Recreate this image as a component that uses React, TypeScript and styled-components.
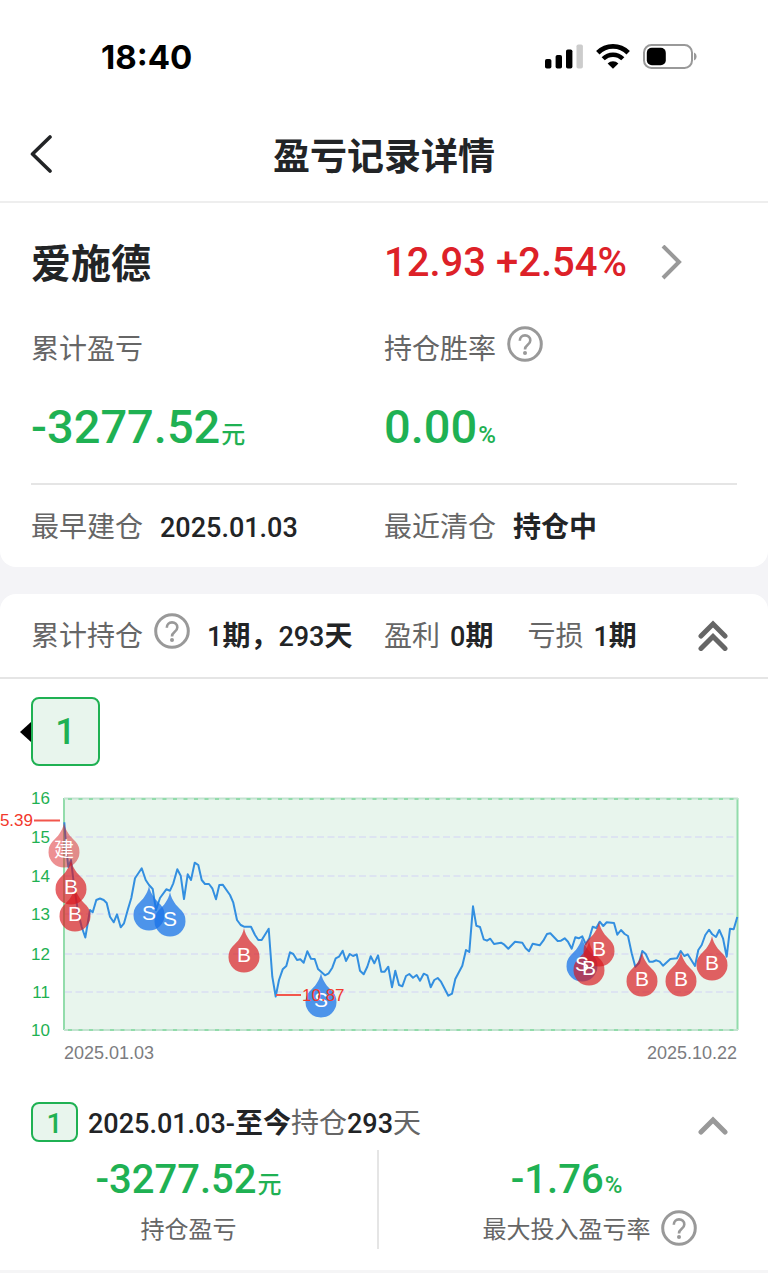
import React from "react";
import styled, { createGlobalStyle } from "styled-components";

const ink = "#222426";
const muted = "#666666";
const green = "#1fb153";
const red = "#dd2128";
const cjk = `"Noto Sans CJK SC", sans-serif`;
const digits = `Roboto, "Noto Sans CJK SC", sans-serif`;

const GlobalStyle = createGlobalStyle`
  *, *::before, *::after { box-sizing: border-box; }
  body { margin: 0; background: #f4f4f7; color: ${ink}; font-family: ${cjk}; overflow-x: hidden; }
  button { margin: 0; padding: 0; border: 0; background: none; color: inherit; font: inherit; cursor: pointer; }
  h1, h2, dl, dd, dt { margin: 0; font-weight: inherit; }
  svg { display: block; }
`;

const StatusBar = styled.div`
  display: flex;
  align-items: center;
  justify-content: space-between;
  height: 110px;
  padding: 2px 71px 0 101px;
  background: #fff;
`;

const Clock = styled.time`
  padding-top: 2px;
  font: 700 33px/40px Inter, sans-serif;
  color: #000;
`;

const StatusIcons = styled.div`
  display: flex;
  align-items: center;
  gap: 13px;
`;

const NavBar = styled.header`
  display: grid;
  grid-template-columns: 60px 1fr 60px;
  align-items: center;
  height: 93px;
  padding: 0 30px 3px;
  background: #fff;
  border-bottom: 2px solid #eeeeee;
`;

const Title = styled.h1`
  font-size: 37px;
  line-height: 48px;
  font-weight: 700;
  text-align: center;
`;

const Card = styled.section<{ $round: "top" | "bottom" }>`
  background: #fff;
  border-radius: ${(p) => (p.$round === "top" ? "16px 16px 0 0" : "0 0 16px 16px")};
`;

const Summary = styled(Card)`
  padding: 30px 31px 0;
  margin-bottom: 27px;
`;

const Columns = styled.div<{ $h: number; $mt?: number }>`
  display: grid;
  grid-template-columns: 1fr 1fr;
  align-items: center;
  height: ${(p) => p.$h}px;
  margin-top: ${(p) => p.$mt ?? 0}px;
`;

const StockName = styled.h2`
  align-self: start;
  font-size: 40px;
  line-height: 56px;
  font-weight: 700;
`;

const Quote = styled.button`
  display: flex;
  align-items: center;
  gap: 34px;
  color: ${red};
  font: 500 40px/60px ${digits};
`;

const Label = styled.span<{ $size?: number }>`
  color: ${muted};
  font-size: ${(p) => p.$size ?? 28}px;
  line-height: 36px;
  white-space: nowrap;
`;

const Strong = styled.span`
  font: 500 27px/36px ${digits};
  white-space: nowrap;
  b { font-weight: 700; font-size: 28px; }
`;

const Inline = styled.div<{ $gap: number }>`
  display: flex;
  align-items: baseline;
  gap: ${(p) => p.$gap}px;
`;

const Amount = styled.div<{ $size: number }>`
  color: ${green};
  font: 500 ${(p) => p.$size}px/${(p) => (p.$size > 45 ? 60 : 44)}px ${digits};
  small { font-size: 24px; line-height: 1; margin-left: 1px; }
`;

const Rule = styled.hr`
  margin: 26px 0 0;
  border: 0;
  height: 2px;
  background: #e5e5e5;
`;

const HelpButton = styled.button<{ $hang?: boolean }>`
  flex: none;
  align-self: center;
  width: 36px;
  height: 36px;
  margin: ${(p) => (p.$hang ? "0 -46px 0 0" : "-3px 0 3px")};
`;

const HoldingHeader = styled.div`
  display: grid;
  grid-template-columns: 1fr 1fr;
  align-items: center;
  height: 85px;
  padding: 0 31px;
  border-bottom: 2px solid #e5e5e5;
`;

const Toggle = styled.button`
  align-self: center;
  margin-left: auto;
  padding: 0 9px;
`;

const PeriodTabs = styled.div`
  display: flex;
  align-items: center;
  padding: 18px 20px 0;
`;

const Marker = styled.span`
  border: solid transparent;
  border-width: 10px 11px 10px 0;
  border-right-color: #000;
`;

const PeriodTab = styled.button`
  width: 69px;
  height: 69px;
  border: 2px solid ${green};
  border-radius: 8px;
  background: #e8f5ed;
  color: ${green};
  font: 500 36px/60px ${digits};
`;

const ChartBox = styled.figure`
  margin: 14px 0 0;
  svg { width: 100%; height: auto; }
`;

const PeriodHeader = styled.div`
  display: flex;
  align-items: center;
  gap: 10px;
  height: 40px;
  margin-top: 32px;
  padding: 0 31px;
`;

const PeriodBadge = styled.span`
  width: 47px;
  height: 40px;
  border: 2px solid ${green};
  border-radius: 8px;
  background: #e8f5ed;
  color: ${green};
  font: 500 28px/40px ${digits};
  text-align: center;
`;

const Stats = styled.dl`
  display: grid;
  grid-template-columns: 1fr 1fr;
  margin: 8px 0 0;
  padding: 0 14px 21px 0;
`;

const Stat = styled.div`
  display: flex;
  flex-direction: column-reverse;
  align-items: center;
  gap: 8px;
  padding: 8px 0 3px;
  & + & { border-left: 2px solid #e5e5e5; }
`;

const NextBand = styled.div`
  height: 3px;
  background: #f5f5f6;
`;

function Help({ label, hang }: { label: string; hang?: boolean }) {
  return (
    <HelpButton type="button" aria-label={label} $hang={hang}>
      <svg width="36" height="36" viewBox="0 0 36 36" fill="none" stroke="#999" strokeWidth="3">
        <circle cx="18" cy="18" r="16.3" />
        <path d="M12.8 14.8C12.8 11.4 15 9.4 18 9.4s5.3 2 5.3 5c0 2.3-1.3 3.5-2.8 4.7C18.8 20.4 18 21.3 18 23.6" strokeWidth="2.6" />
        <circle cx="18" cy="27" r="2" fill="#999" stroke="none" />
      </svg>
    </HelpButton>
  );
}

function Chevrons({ double }: { double?: boolean }) {
  return (
    <svg
      width="30"
      height={double ? 31 : 25}
      viewBox={double ? "0 0 30 31" : "0 -6 30 25"}
      fill="none"
      stroke={double ? "#666" : "#999"}
      strokeWidth="5"
      strokeLinecap="round"
    >
      <path d="M3 16 15 4l12 12" strokeLinejoin="miter" />
      {double && <path d="M3 28.5 15 16.5l12 12" />}
    </svg>
  );
}

const prices =
  "64.3,822.3 66,845 68.3,867 71,860 74,885 78,912 81.7,927 85.3,937.5 90,910 92.7,912.3 96.3,900 100,898.5 103.7,900 106.7,903 110,916.7 113.7,922.3 117,914.3 120.7,927.3 124,923.3 128,909 131.3,898 135,878.3 141.7,868.3 145.7,880 149,885 152.7,889 156,910 160,898 166.3,889.3 170,890.7 173.3,883.3 177.3,869.3 180.7,875.7 184,899 187.7,874.3 191,880 194.7,862.7 198.3,865 201.7,880 205,884 209,884 212.3,888.3 216,899.3 219.3,885 222.7,884.7 230,895 233.3,902.7 237,920 240.7,925 244,926.7 251,926.7 255,935 258.3,940 261.7,940 268.7,928.7 272.3,976.7 275.7,996.5 279,980 282.7,969.3 286.3,966 290,952.3 293.3,954 297,960 300.3,959.3 303.7,962.7 307.3,951.3 311,958.7 314.7,959 318,969 325,975.3 328.7,973.3 332.3,967.7 335.7,958.3 339,956.7 342.7,950.7 346,961 349.7,954 353,956 356.7,954.3 360,970.7 363.7,974.3 367.3,966.7 370.7,956.3 374.3,963.3 378,955.3 381.3,971.7 384.7,971.7 388.3,966.7 392,987.3 395.3,970.7 399,985 402.3,986.3 406,976 409.3,974 413,977.7 416.7,975 420,980.7 423.7,973.7 427.3,975.3 430.7,987.3 434.3,980 437.7,978 441,981.7 448.3,995.7 452,993.7 455.3,979 462.3,965.7 466,950 469.3,952 473,906.3 476.3,925.7 480,927 483.7,939.3 487,940.7 490.3,938.7 494,944 501,942.7 504.3,944.7 508.3,948.7 515,941.7 522.3,942.7 525.7,948.3 529,951.3 532.7,943.7 539.7,945.3 543.3,940.7 547,934 550.3,933.3 557.7,941 561,940.7 564.7,938.3 568,941.7 571.7,948.7 575.3,937.3 578.7,938.3 582.3,936.3 585.7,944 589.3,938.3 592.7,926.7 596.3,928 599.7,921.7 603.3,926 606.7,922.3 614,923 617.3,934.7 621,930 624.7,934 628,936 631.7,953.3 635.3,966.7 639,963 642.3,951 645.7,954 649.3,961.7 652.7,961.7 656.3,960.3 659.7,961.7 663,965.7 670.3,959 677,958.3 680.7,951 684.3,956 687.7,954.3 695,966 698.3,950 701.7,945 705.3,935 709,929.7 712.3,934.3 716,937 719.3,930 723,938.3 726.7,956.7 730,928.7 733.7,929.3 737.3,917";

const ticks = [
  { label: "16", y: 798 },
  { label: "15", y: 837 },
  { label: "14", y: 876 },
  { label: "13", y: 914 },
  { label: "12", y: 954 },
  { label: "11", y: 992 },
  { label: "10", y: 1030 },
];

type Trade = { kind: "建" | "B" | "S"; x: number; y: number };

const trades: Trade[] = [
  { kind: "建", x: 64, y: 852 },
  { kind: "B", x: 71, y: 889 },
  { kind: "B", x: 75, y: 916 },
  { kind: "S", x: 149, y: 915 },
  { kind: "S", x: 170, y: 921 },
  { kind: "B", x: 244, y: 957 },
  { kind: "S", x: 321, y: 1002 },
  { kind: "S", x: 582, y: 966 },
  { kind: "B", x: 589, y: 970 },
  { kind: "B", x: 599, y: 951 },
  { kind: "B", x: 642, y: 981 },
  { kind: "B", x: 681, y: 981 },
  { kind: "B", x: 712, y: 965 },
];

function Drop({ kind, x, y }: Trade) {
  return (
    <path
      transform={`translate(${x} ${y})`}
      d="M0-29C2-20 6-16 11.5-10.4A15.5 15.5 0 1 1-11.5-10.4C-6-16-2-20 0-29Z"
      fill={kind === "S" ? "#1a73e8" : "#d9161c"}
      fillOpacity={kind === "建" ? 0.48 : kind === "S" ? 0.75 : 0.67}
    />
  );
}

function PriceChart() {
  return (
    <ChartBox>
      <svg viewBox="0 780 768 290" fontFamily={`"Liberation Sans", "Noto Sans CJK SC", sans-serif`} role="img" aria-label="持仓走势">
        <rect x="64" y="798" width="674" height="232" fill="#e8f5ed" />
        <path d="M64 798V1030M737.5 798V1030" stroke="#92dcab" strokeWidth="2" />
        <path d="M64 798.5H738M64 1030H738" stroke="#c3e2d0" strokeWidth="2" />
        <path d="M68 799H738M68 1030H738" stroke="#92dcab" strokeWidth="2" strokeDasharray="4 6.5" />
        {ticks.slice(1, -1).map((t) => (
          <path key={t.label} d={`M65 ${t.y}H737`} stroke="#dde4f1" strokeWidth="2" strokeDasharray="7 3.5" />
        ))}
        {ticks.map((t) => (
          <text key={t.label} x="50" y={t.y + 6} textAnchor="end" fill={green} fontSize="17">
            {t.label}
          </text>
        ))}
        <polyline points={prices} fill="none" stroke="#338fe0" strokeWidth="2" strokeLinejoin="round" />
        {trades.map((t) => (
          <Drop key={`${t.x}-${t.y}`} {...t} />
        ))}
        {trades.map((t) => (
          <text key={`${t.x}-${t.y}`} x={t.x} y={t.y + 5} textAnchor="middle" fill="#fff" fontSize={t.kind === "建" ? 20 : 21}>
            {t.kind}
          </text>
        ))}
        <g fill="#f2382c" fontSize="17">
          <path d="M34 820.5H60M276 995H301" stroke="#f2564c" strokeWidth="2" />
          <text x="33" y="826" textAnchor="end">5.39</text>
          <text x="302" y="1001">10.87</text>
        </g>
        <g fill="#7c7c80" fontSize="18">
          <text x="64" y="1059">2025.01.03</text>
          <text x="737" y="1059" textAnchor="end">2025.10.22</text>
        </g>
      </svg>
    </ChartBox>
  );
}

export default function App() {
  return (
    <>
      <GlobalStyle />
      <StatusBar>
        <Clock>18:40</Clock>
        <StatusIcons>
          <svg width="38" height="25" viewBox="0 0 38 25">
            <rect y="15" width="6.4" height="9.5" rx="1.8" />
            <rect x="10.6" y="11" width="6.4" height="13.5" rx="1.8" />
            <rect x="21" y="5.5" width="6.4" height="19" rx="1.8" />
            <rect x="31.5" y="0.5" width="6.4" height="24" rx="1.8" fill="#ccc" />
          </svg>
          <svg width="34" height="25" viewBox="0 0 34 25" fill="none" stroke="#000">
            <path d="M1.8 8.7a21.5 21.5 0 0 1 30.4 0" strokeWidth="4.8" />
            <path d="M7.2 14.8a13.8 13.8 0 0 1 19.6 0" strokeWidth="4.4" />
            <path d="M17 24.8 11.6 19.4a7.8 7.8 0 0 1 10.8 0Z" fill="#000" stroke="none" />
          </svg>
          <svg width="54" height="25" viewBox="0 0 54 25">
            <rect x="1" y="1" width="48" height="23" rx="7.5" fill="none" stroke="#999" strokeWidth="2" />
            <rect x="3.8" y="3.8" width="19" height="17.4" rx="5" />
            <path d="M51 8.5c3.4 1.2 3.4 6.8 0 8Z" fill="#999" />
          </svg>
        </StatusIcons>
      </StatusBar>
      <NavBar>
        <button type="button" aria-label="返回">
          <svg width="23" height="38" viewBox="0 0 23 38" fill="none" stroke={ink} strokeWidth="3.6" strokeLinecap="round" strokeLinejoin="round">
            <path d="M20 2 2.5 19 20 36" />
          </svg>
        </button>
        <Title>盈亏记录详情</Title>
      </NavBar>

      <Summary $round="bottom">
        <Columns $h={60}>
          <StockName>爱施德</StockName>
          <Quote type="button">
            12.93 +2.54%
            <svg width="22" height="36" viewBox="0 1 22 36" fill="none" stroke="#999" strokeWidth="4">
              <path d="M2 2 18 18 2 34" />
            </svg>
          </Quote>
        </Columns>
        <Columns $h={36} $mt={36}>
          <Label>累计盈亏</Label>
          <Inline $gap={11}>
            <Label>持仓胜率</Label>
            <Help label="持仓胜率说明" />
          </Inline>
        </Columns>
        <Columns $h={60} $mt={32}>
          <Amount $size={47}>-3277.52<small>元</small></Amount>
          <Amount $size={47}>0.00<small>%</small></Amount>
        </Columns>
        <Rule />
        <Columns $h={82}>
          <Inline $gap={17}>
            <Label>最早建仓</Label>
            <Strong>2025.01.03</Strong>
          </Inline>
          <Inline $gap={17}>
            <Label>最近清仓</Label>
            <Strong><b>持仓中</b></Strong>
          </Inline>
        </Columns>
      </Summary>

      <Card $round="top">
        <HoldingHeader>
          <Inline $gap={17}>
            <Inline $gap={11}>
              <Label>累计持仓</Label>
              <Help label="累计持仓说明" />
            </Inline>
            <Strong>1<b>期，</b>293<b>天</b></Strong>
          </Inline>
          <Inline $gap={34}>
            <Inline $gap={10}>
              <Label>盈利</Label>
              <Strong>0<b>期</b></Strong>
            </Inline>
            <Inline $gap={10}>
              <Label>亏损</Label>
              <Strong>1<b>期</b></Strong>
            </Inline>
            <Toggle type="button" aria-label="全部收起">
              <Chevrons double />
            </Toggle>
          </Inline>
        </HoldingHeader>

        <PeriodTabs>
          <Marker />
          <PeriodTab type="button">1</PeriodTab>
        </PeriodTabs>
        <PriceChart />

        <PeriodHeader>
          <PeriodBadge>1</PeriodBadge>
          <div>
            <Strong>2025.01.03-<b>至今</b></Strong>
            <Label>持仓</Label>
            <Strong>293</Strong>
            <Label>天</Label>
          </div>
          <Toggle type="button" aria-label="收起">
            <Chevrons />
          </Toggle>
        </PeriodHeader>

        <Stats>
          <Stat>
            <Label as="dt" $size={24}>持仓盈亏</Label>
            <dd><Amount $size={40}>-3277.52<small>元</small></Amount></dd>
          </Stat>
          <Stat>
            <Inline as="dt" $gap={10}>
              <Label $size={24}>最大投入盈亏率</Label>
              <Help label="最大投入盈亏率说明" hang />
            </Inline>
            <dd><Amount $size={40}>-1.76<small>%</small></Amount></dd>
          </Stat>
        </Stats>
        <NextBand />
      </Card>
    </>
  );
}
